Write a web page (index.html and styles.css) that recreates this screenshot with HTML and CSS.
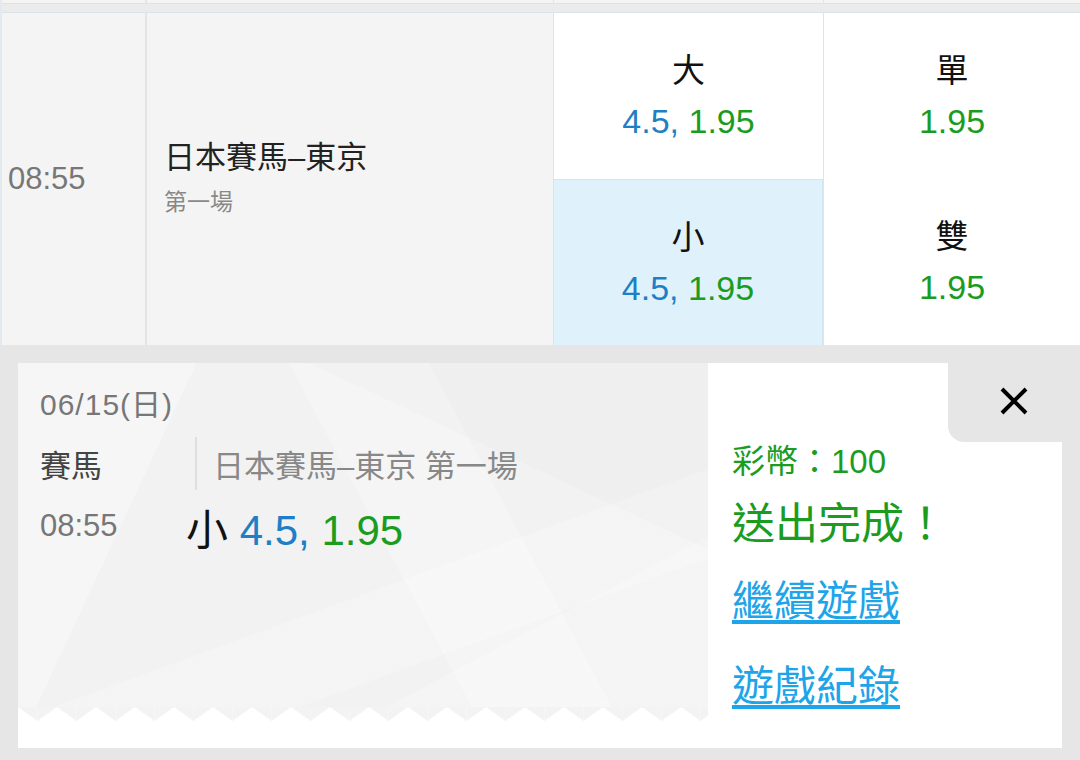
FILE: index.html
```html
<!DOCTYPE html>
<html lang="zh-Hant">
<head>
    <meta charset="UTF-8">
    <meta name="viewport" content="width=device-width, initial-scale=1.0">
    <title>賽馬 - 投注單</title>
    <link rel="stylesheet" href="styles.css">
</head>
<body>
    <div class="board">
        <!-- tail of the previous race row -->
        <div class="row-prev">
            <div class="cell time"></div>
            <div class="cell name"></div>
            <div class="cell"></div>
            <div class="cell"></div>
        </div>

        <div class="race">
            <div class="time">08:55</div>
            <div class="name">
                <div class="title">日本賽馬–東京</div>
                <div class="sub">第一場</div>
            </div>
            <div class="pick">
                <div class="label">大</div>
                <div class="price"><span class="hdp">4.5,</span> <span class="rate">1.95</span></div>
            </div>
            <div class="pick">
                <div class="label">單</div>
                <div class="price"><span class="rate">1.95</span></div>
            </div>
            <div class="pick selected">
                <div class="label">小</div>
                <div class="price"><span class="hdp">4.5,</span> <span class="rate">1.95</span></div>
            </div>
            <div class="pick">
                <div class="label">雙</div>
                <div class="price"><span class="rate">1.95</span></div>
            </div>
        </div>
    </div>

    <div class="slip">
        <div class="ticket">
            <div class="ticket-body">
                <div class="date">06/15(日)</div>
                <div class="meta">
                    <div class="sport">賽馬</div>
                    <div class="event">日本賽馬–東京 第一場</div>
                </div>
                <div class="bet">
                    <div class="bet-time">08:55</div>
                    <div class="bet-pick">小 <span class="hdp">4.5,</span> <span class="rate">1.95</span></div>
                </div>
            </div>
            <div class="zigzag"></div>
        </div>

        <div class="result">
            <div class="close-row">
                <button class="close" aria-label="關閉">
                    <svg width="28" height="28" viewBox="0 0 28 28">
                        <path d="M2 2 L26 26 M26 2 L2 26" stroke="#000" stroke-width="4" fill="none"/>
                    </svg>
                </button>
            </div>
            <div class="coins">彩幣：100</div>
            <div class="done">送出完成！</div>
            <a class="link first" href="#">繼續遊戲</a>
            <a class="link" href="#">遊戲紀錄</a>
        </div>
    </div>
</body>
</html>
```

FILE: styles.css
```css
body {
    margin: 0;
    background-color: #e6e6e6;
    font-family: "Liberation Sans", "Noto Sans CJK TC", sans-serif;
    color: #222;
}
.board {
    border-left: 2px solid #e2eaf0;
    background-color: #ebebeb;
}
.row-prev,
.race {
    display: grid;
    grid-template-columns: 145px 406px 270px 1fr;
}
.row-prev {
    height: 3px;
    border-bottom: 1px solid #dbe4eb;
    background-color: #f4f4f4;
}
.row-prev .cell {
    border-left: 1px solid #dfe5ea;
}
.row-prev .cell:first-child {
    border-left: none;
}
.row-prev .time {
    border-right: 2px solid #e3e6e9;
}
.row-prev .name {
    border-left: none;
}
.race {
    margin-top: 8px;
    border-top: 1px solid #dbe4eb;
    grid-template-rows: 166px 166px;
    background-color: #f4f4f4;
}
.race .time {
    grid-row: span 2;
    display: flex;
    align-items: center;
    padding-left: 6px;
    border-right: 2px solid #e3e4e6;
    font-size: 31px;
    color: #777;
}
.race .name {
    grid-row: span 2;
    display: flex;
    flex-direction: column;
    justify-content: center;
    padding-left: 17px;
}
.name .title {
    font-size: 31px;
    line-height: 40px;
    color: #222;
}
.name .sub {
    margin-top: 5px;
    font-size: 23px;
    line-height: 38px;
    color: #888;
}
.pick {
    display: flex;
    flex-direction: column;
    justify-content: center;
    align-items: center;
    background-color: #fff;
    border-left: 1px solid #dfe4e8;
}
.pick:nth-of-type(1),
.pick:nth-of-type(2) {
    border-bottom: 1px solid #dfe4e8;
}
.pick.selected {
    background-color: #dff2fc;
    border: 1px solid #d2e5f0;
    border-bottom: none;
}
.pick .label {
    font-size: 33px;
    line-height: 50px;
    color: #111;
}
.pick .price {
    font-size: 34px;
    line-height: 50px;
}
.hdp {
    color: #1f7fc4;
}
.rate {
    color: #1b9c1f;
}

/* bet slip */
.slip {
    display: flex;
    margin: 18px 18px 0 18px;
    height: 385px;
}
.ticket {
    width: 690px;
    display: flex;
    flex-direction: column;
    background-color: #fff;
    padding-bottom: 27px;
    box-sizing: border-box;
}
.ticket-body {
    flex: 1;
    padding: 22px 0 0 22px;
    background-color: #f2f2f2;
    background-image:
        linear-gradient(115deg, rgba(255, 255, 255, 0.3) 0 21%, transparent 21%),
        linear-gradient(205deg, rgba(0, 0, 0, 0.012) 0 28%, transparent 28%),
        linear-gradient(62deg, transparent 0 52%, rgba(255, 255, 255, 0.25) 52% 68%, transparent 68%),
        linear-gradient(-28deg, rgba(255, 255, 255, 0.2) 0 24%, transparent 24%),
        linear-gradient(160deg, transparent 0 60%, rgba(255, 255, 255, 0.2) 60% 75%, transparent 75%);
}
.zigzag {
    height: 14px;
    background-image:
        linear-gradient(to bottom right, #f3f3f3 25%, transparent 25%),
        linear-gradient(to bottom left, #f3f3f3 25%, transparent 25%);
    background-size: 39px 28px;
    background-position: 19.5px 0;
    background-repeat: repeat-x;
}
.date {
    font-size: 30px;
    line-height: 40px;
    letter-spacing: 1px;
    color: #777;
}
.meta {
    display: flex;
    margin-top: 12px;
    height: 53px;
    align-items: center;
}
.sport {
    width: 155px;
    font-size: 31px;
    color: #444;
}
.event {
    align-self: stretch;
    display: flex;
    align-items: center;
    padding-left: 16px;
    border-left: 2px solid #dedede;
    font-size: 31px;
    color: #888;
}
.bet {
    display: flex;
    margin-top: 16px;
}
.bet-time {
    width: 146px;
    font-size: 31px;
    line-height: 40px;
    color: #777;
}
.bet-pick {
    font-size: 42px;
    line-height: 50px;
    color: #111;
}
.result {
    flex: 1;
    display: flex;
    flex-direction: column;
    align-items: flex-start;
    background-color: #fff;
    padding-left: 24px;
}
.close-row {
    align-self: stretch;
    display: flex;
    justify-content: flex-end;
}
.close {
    width: 114px;
    height: 79px;
    padding: 0 0 4px 18px;
    border: none;
    border-bottom-left-radius: 16px;
    background-color: #e6e6e6;
    display: flex;
    align-items: center;
    justify-content: center;
    cursor: pointer;
}
.coins {
    font-size: 33px;
    line-height: 40px;
    color: #1b9c1f;
}
.done {
    margin-top: 17px;
    font-size: 43px;
    line-height: 50px;
    color: #1b9c1f;
}
.link {
    font-size: 42px;
    line-height: 50px;
    color: #1ea4e9;
    text-decoration: underline;
    text-underline-offset: 4px;
}
.link.first {
    margin-top: 28px;
    margin-bottom: 35px;
}
```
